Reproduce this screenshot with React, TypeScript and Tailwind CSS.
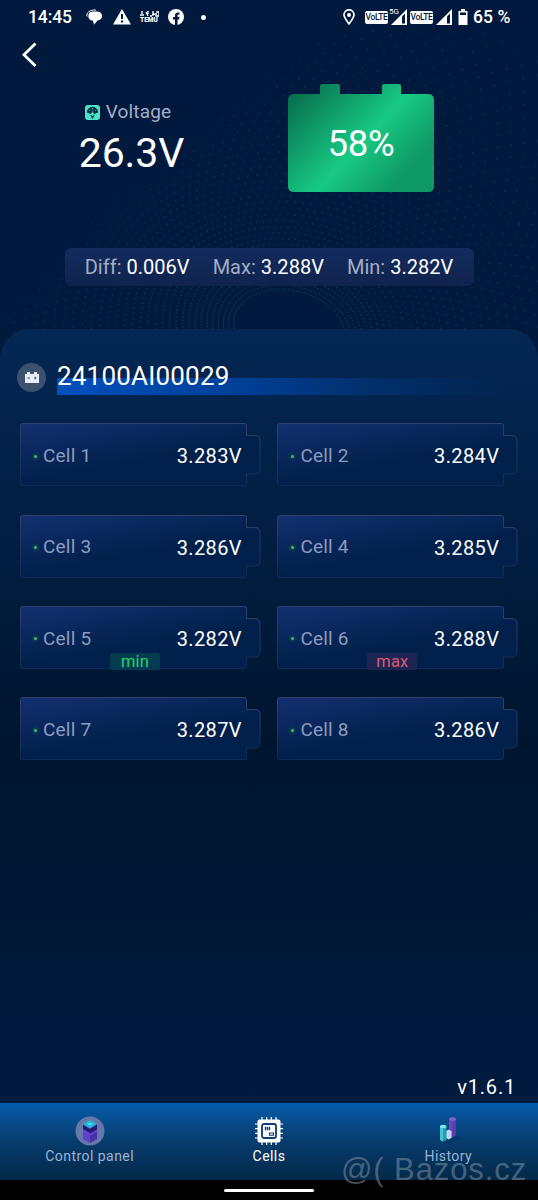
import React from "react";

const cells = [
  { name: "Cell 1", voltage: "3.283V" },
  { name: "Cell 2", voltage: "3.284V" },
  { name: "Cell 3", voltage: "3.286V" },
  { name: "Cell 4", voltage: "3.285V" },
  { name: "Cell 5", voltage: "3.282V", tag: "min" },
  { name: "Cell 6", voltage: "3.288V", tag: "max" },
  { name: "Cell 7", voltage: "3.287V" },
  { name: "Cell 8", voltage: "3.286V" },
];

// Faint swirl of dots behind the header
const swirl: { x: number; y: number; r: number; o: number }[] = [];
for (let arm = 0; arm < 120; arm++) {
  for (let ring = 0; ring < 42; ring++) {
    const t = (arm / 120) * Math.PI * 2;
    const dist = 44 + ring * 4.2 + ring * ring * 0.07 + Math.sin(t * 2) * 4;
    const angle = t + ring * 0.024 + Math.sin(t) * 0.25;
    const x = 290 + Math.cos(angle) * dist * 1.25;
    const y = 332 + Math.sin(angle) * dist;
    if (y > 335 || y < 24 || x < 0 || x > 538) continue;
    // the dots thin out towards the upper left corner
    const fade = Math.min(1, Math.max(0, (x + y * 1.1 - 290) / 110));
    swirl.push({
      x,
      y,
      r: 0.85 + ring * 0.014,
      o: fade * Math.max(0.2, 0.72 - ring * 0.012),
    });
  }
}

const SwirlBackground = () => (
  <svg className="absolute inset-0" width="538" height="340" viewBox="0 0 538 340">
    {swirl.map((d, i) => (
      <circle key={i} cx={d.x} cy={d.y} r={d.r} fill="#0a4064" opacity={d.o} />
    ))}
  </svg>
);

const VolteBadge = () => (
  <span className="flex h-[13px] w-[23px] items-center justify-center rounded-[2px] bg-white">
    <span className="text-[8.5px] leading-none font-medium tracking-[-0.3px] text-[#00193d]">
      VoLTE
    </span>
  </span>
);

const Signal = () => (
  <svg width="16" height="16" viewBox="0 0 16 16">
    <path d="M16 0V16H0Z" fill="#fff" />
    <path d="M11 7.5L14 4.5V14.5H11Z" fill="#00193d" />
  </svg>
);

const StatusBar = () => (
  <div className="flex h-8 items-center pt-[2px] pl-[28px] text-[17.5px] font-medium text-white">
    <span className="w-[58px] shrink-0 tracking-[-0.1px]">14:45</span>
    {/* Chat */}
    <svg width="17" height="16" viewBox="0 0 17 16">
      <path d="M6.500 2.500h5C17.500 2.500 17.500 11.500 11.500 11.500L8 15.800 7 11.500C.8 11.500 1 2.500 6.500 2.500Z" fill="#fff" />
      <path d="M1 7.500C.2 3.500 3.500 .8 10 1" fill="none" stroke="#fff" strokeWidth="1" />
    </svg>
    {/* Warning */}
    <svg className="ml-[10px]" width="18" height="16" viewBox="0 0 18 16">
      <path d="M9 0L18 15.5H0Z" fill="#fff" />
      <path d="M9 5v5M9 11.5v2" stroke="#00193d" strokeWidth="2" />
    </svg>
    {/* Temu */}
    <span className="ml-[8px] flex w-5 flex-col items-center">
      <svg width="19" height="6" viewBox="0 0 19 6" fill="none" stroke="#fff" strokeWidth="1.4">
        <path d="M2 0v3M0 4h4M6 1l2 4M8 0v3M10 5h2M13 0v5M12 4l3-1M16 1h3v4h-3V2" />
      </svg>
      <span className="h-[6px] text-[6.5px] leading-[7px] font-black">TEMU</span>
    </span>
    {/* Facebook */}
    <svg className="ml-[9px]" width="16" height="16" viewBox="0 0 16 16">
      <circle cx="8" cy="8" r="8" fill="#fff" />
      <path d="M7 16v-5.500H5V8h2V6.500C7 4 8.500 3 11.500 3.500v2C10 5.400 9.500 5.700 9.500 7v1h2l-.4 2.500H9.500V16Z" fill="#00193d" />
    </svg>
    <span className="ml-[17px] size-[5px] rounded-full bg-white" />
    {/* Location */}
    <svg className="ml-[137px]" width="12" height="16" viewBox="0 0 12 16">
      <path d="M6 14.800C3.500 11.500 1 8.500 1 5.800a5 5 0 0 1 10 0C11 8.500 8.500 11.500 6 14.800Z" fill="none" stroke="#fff" strokeWidth="1.7" />
      <circle cx="6" cy="6" r="2" fill="#fff" />
    </svg>
    <span className="ml-[10px] flex items-center">
      <VolteBadge />
      <span className="relative ml-[3px]">
        <Signal />
        <span className="absolute -top-[1px] -left-[2px] text-[8px] leading-none font-normal">
          5G
        </span>
      </span>
    </span>
    <span className="ml-[3px] flex items-center gap-[3px]">
      <VolteBadge />
      <Signal />
    </span>
    <svg className="ml-[6px]" width="10" height="16" viewBox="0 0 10 16">
      <path d="M3 0h4v2h2.500v14H.5V2H3Z" fill="#fff" />
      <path d="M2 3.500h6V6H2Z" fill="#00193d" />
    </svg>
    <span className="ml-[5px] tracking-[0.1px] whitespace-nowrap">65 %</span>
  </div>
);

const Summary = () => (
  <div className="flex h-[165px]">
    <div className="flex w-[263px] flex-col items-center pt-[17px] pr-[8px] pl-px">
      <div className="flex items-center gap-[6px] text-[19px] leading-6 tracking-[0.15px] text-[#a5adc6]">
        <svg width="15" height="15" viewBox="0 0 15 15">
          <rect width="15" height="15" rx="3" fill="#4de3c7" />
          <path d="M1.800 7.500a5.700 5.700 0 0 1 11.400 0L9.500 9 8 7.500 7.500 5 7 7.500 5.500 9Z" fill="#05304a" />
          <path d="M4 5l1 1M7.500 3v1.500M11 5l-1 1" stroke="#4de3c7" strokeWidth="0.8" />
          <path d="M6 10l1.500 3L9 10" fill="none" stroke="#05304a" strokeWidth="1.2" />
        </svg>
        Voltage
      </div>
      <div className="mt-[4px] ml-[7px] text-[41px] leading-[50px] tracking-[-0.1px] text-white">26.3V</div>
    </div>
    <div className="relative ml-[25px] h-[109px] w-[146px]">
      <svg width="146" height="109" viewBox="0 0 146 109">
        <defs>
          <linearGradient id="battery" gradientUnits="userSpaceOnUse" x1="14" y1="3" x2="122" y2="106">
            <stop offset="0" stopColor="#07704f" />
            <stop offset="0.55" stopColor="#18c983" />
            <stop offset="0.9" stopColor="#0e9966" />
          </linearGradient>
        </defs>
        <path
          d="M6 11H32V3q0-2 2-2H50q2 0 2 2V11H94V3q0-2 2-2h15q2 0 2 2V11H140q6 0 6 6V103q0 6-6 6H6q-6 0-6-6V17q0-6 6-6Z"
          fill="url(#battery)"
        />
      </svg>
      <span className="absolute inset-x-0 top-[39px] text-center text-[36.500px] leading-[44px] tracking-[-0.2px] text-white">
        58%
      </span>
    </div>
  </div>
);

const Stat = ({ label, value }: { label: string; value: string }) => (
  <span className="text-[#a5adc6]">
    {label}: <span className="text-white">{value}</span>
  </span>
);

const CellCard = ({ name, voltage, tag }: { name: string; voltage: string; tag?: string }) => (
  <div className="relative h-[63px] w-[241px]">
    <svg className="absolute inset-0" width="241" height="63" viewBox="0 0 241 63">
      <defs>
        <linearGradient id="cell" gradientUnits="userSpaceOnUse" x1="74" y1="-14" x2="84" y2="44">
          <stop offset="0" stopColor="#143071" />
          <stop offset="1" stopColor="#01214c" />
        </linearGradient>
        <linearGradient id="cellEdge" x1="0" y1="0" x2="0" y2="1">
          <stop offset="0" stopColor="#33416a" />
          <stop offset="1" stopColor="#0c2b55" />
        </linearGradient>
      </defs>
      <path
        d="M2.500 .5H224.500q2 0 2 2V12.500H235q5 0 5 5V46q0 5-5 5H226.500V60.500q0 2-2 2H2.500q-2 0-2-2V2.500q0-2 2-2Z"
        fill="url(#cell)"
        stroke="url(#cellEdge)"
      />
    </svg>
    <div className="relative flex h-full items-center pt-[3px] pr-[19px] pl-[14px]">
      <span className="size-[3px] rounded-full bg-[#4fae7c] shadow-[0_0_3px_1px_#0b5a44]" />
      <span className="ml-[6px] text-[19px] tracking-[0.2px] text-[#8d9bbd]">{name}</span>
      <span className="ml-auto text-[20px] tracking-[0.4px] text-white">{voltage}</span>
    </div>
    {tag && (
      <span
        className={`absolute top-[47px] left-[90px] h-[17px] w-[50px] rounded-[2px] text-center text-[16.5px] leading-[17px] tracking-[0.2px] ${
          tag === "min" ? "bg-[#053b51] text-[#20d968]" : "bg-[#1d2650] text-[#d95a76]"
        }`}
      >
        {tag}
      </span>
    )}
  </div>
);

const ControlIcon = () => (
  <svg width="30" height="30" viewBox="0 0 30 30">
    <circle cx="15" cy="15" r="14.500" fill="#6478a9" />
    <path d="M8 8l7 4v15l-7-4Z" fill="#5a42c9" />
    <path d="M22 8l-7 4v15l7-4Z" fill="#4630a8" />
    <path d="M8 9l7 4 7-4v4l-7 4-7-4Z" fill="#211a6d" />
    <path d="M8 14l7 4 7-4v1.500l-7 4-7-4Z" fill="#7a43dc" />
    <path d="M15 4l7 4-7 4.500L8 8Z" fill="#22b5d8" />
    <path d="M12 8l3-1.500L18 8l-3 1.500Z" fill="#49dbe5" />
  </svg>
);

const CellsIcon = () => (
  <svg width="30" height="30" viewBox="0 0 30 30">
    <path d="M8 1v28M12.700 1v28M17.300 1v28M22 1v28M1 8h28M1 12.700h28M1 17.300h28M1 22h28" stroke="#fff" strokeWidth="1.200" />
    <rect x="3.500" y="3.500" width="23" height="23" rx="2" fill="#fff" />
    <rect x="8" y="8" width="14" height="14" rx="2" fill="#fff" stroke="#0b3d73" strokeWidth="1.800" />
    <path d="M11.500 10.800v3.400M13.500 10.800v3.400M15.500 10.800v3.400" stroke="#0b3d73" strokeWidth="1.400" />
    <path d="M15.500 17h4v2.200h-4Z" fill="none" stroke="#0b3d73" strokeWidth="1.100" />
  </svg>
);

const HistoryIcon = () => (
  <svg width="30" height="30" viewBox="0 0 30 30">
    <path d="M2 22l13-6 14 6-14 5.500Z" fill="#06386a" />
    <path d="M16 3.500H23V19l-4 2.500-3-1.500Z" fill="#7146bd" />
    <path d="M19.500 4L23 3.500V19l-3.500 2.300Z" fill="#6139ab" />
    <ellipse cx="19.500" cy="3" rx="3.500" ry="1.800" fill="#8460cf" />
    <path d="M13 15l2.500-1.500 3 1.500v7l-3 1.500-2.500-1.500Z" fill="#bdd5fa" />
    <path d="M7 11h6.500v13l-3.500 1.500L7 24Z" fill="#259bb6" />
    <path d="M7 11h3v14.500L7 24Z" fill="#43c4cf" />
    <ellipse cx="10.200" cy="10.500" rx="3.300" ry="1.800" fill="#7be8e6" />
  </svg>
);

const Tab = ({ label, active, children }: { label: string; active?: boolean; children: React.ReactNode }) => (
  <div className="flex flex-1 flex-col items-center pt-[13px]">
    {children}
    <span
      className={`mt-px text-[14px] leading-[18px] tracking-[0.45px] ${active ? "text-white" : "text-[#9db4d3]"}`}
    >
      {label}
    </span>
  </div>
);

const App: React.FC = () => {
  return (
    <div className="relative flex h-[1200px] w-[538px] flex-col overflow-hidden bg-[#00193d] font-['Roboto',sans-serif]">
      <SwirlBackground />

      {/* Header */}
      <header className="relative h-[329px]">
        <StatusBar />
        <div className="h-[51px] pt-[10px] pl-[21px]">
          <svg width="17" height="26" viewBox="0 0 17 26">
            <path d="M14.500 1.500L3 12.800 14.500 24" fill="none" stroke="#fff" strokeWidth="2.800" />
          </svg>
        </div>
        <Summary />
        <div className="mx-auto flex h-[38px] w-[409px] items-center justify-center gap-[23px] rounded-md bg-linear-to-b from-[#122b5d] to-[#10234e] text-[20px] tracking-[0.02px] whitespace-nowrap">
          <Stat label="Diff" value="0.006V" />
          <Stat label="Max" value="3.288V" />
          <Stat label="Min" value="3.282V" />
        </div>
      </header>

      {/* Cells */}
      <main className="relative flex h-[774px] flex-col rounded-t-[30px] bg-linear-to-b from-[#042754] via-[#00152f] via-55% to-[#001a40]">
        <div className="flex items-center pt-[30px] pl-[17px]">
          <span className="flex size-[29px] items-center justify-center rounded-full bg-[#3c5070]">
            <svg width="14" height="11" viewBox="0 0 14 11">
              <path d="M0 2h2V0h3v2h4V0h3v2h2v9H0Z" fill="#e6edfb" />
              <path d="M2.500 6h2.500M9 6h2.500M10.250 4.800v2.400" stroke="#3c5070" />
            </svg>
          </span>
          <div className="ml-[11px] h-9 w-[450px] bg-[linear-gradient(90deg,#0050bd,#00419b_38%,#02306d_68%,transparent)] bg-[length:100%_17px] bg-bottom bg-no-repeat text-[26px] leading-[35px] tracking-[0.2px] text-white">
            24100AI00029
          </div>
        </div>
        <div className="grid grid-cols-[241px_241px] gap-x-[16.400px] gap-y-[28.300px] pt-[28.300px] pl-[20px]">
          {cells.map((cell) => (
            <CellCard key={cell.name} {...cell} />
          ))}
        </div>
        <div className="mt-auto pr-[22px] pb-[3px] text-right text-[20px] leading-[26px] tracking-[0.8px] text-white">
          v1.6.1
        </div>
      </main>

      {/* Bottom tabs */}
      <nav className="relative flex h-[77px] bg-linear-to-b from-[#065cac] via-[#073c6d] via-50% to-[#032949]">
        <Tab label="Control panel">
          <ControlIcon />
        </Tab>
        <Tab label="Cells" active>
          <CellsIcon />
        </Tab>
        <Tab label="History">
          <HistoryIcon />
        </Tab>
      </nav>
      <div className="flex h-5 justify-center bg-black pt-[9px]">
        <div className="h-[3px] w-[90px] rounded-full bg-white" />
      </div>

      {/* Watermark */}
      <div className="absolute top-[1151px] left-[341px] font-['Liberation_Sans',sans-serif] text-[31px] leading-[38px] tracking-[0.9px] whitespace-nowrap text-[#8899aa]/50">
        @( Bazos.cz
      </div>
    </div>
  );
};

export default App;
